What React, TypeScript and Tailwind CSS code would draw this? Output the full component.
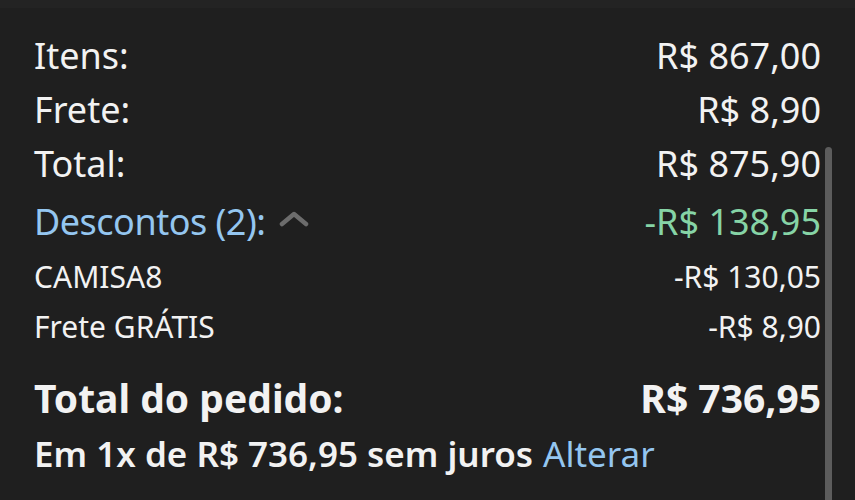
const Row = ({ label, value, className }: { label: string; value: string; className: string }) => (
    <div className={"flex justify-between items-center " + className}>
        <span>{label}</span>
        <span>{value}</span>
    </div>
)

const App = () => {
    return (
        <div className="w-[855px] h-[500px] bg-[#1f1f1f] overflow-hidden flex flex-col text-[#f2f2f2]" style={{ fontFamily: '"Noto Sans", "Open Sans", sans-serif' }}>
            <div className="h-[8px] bg-[#232323] shrink-0" />
            <div className="flex flex-1">
                <div className="flex-1 pl-[34px] pr-[4px] pt-[21px]">
                    <Row label="Itens:" value="R$ 867,00" className="h-[54px] text-[36px]" />
                    <Row label="Frete:" value="R$ 8,90" className="h-[54px] text-[36px]" />
                    <Row label="Total:" value="R$ 875,90" className="h-[54px] text-[36px]" />
                    <div className="flex justify-between items-center h-[62px] text-[36px]">
                        <span className="flex items-center text-[#94c6f0]">
                            <span className="tracking-[-0.5px]">Descontos (2):</span>
                            <svg width="30" height="16" viewBox="0 0 30 16" className="ml-[14px] mb-[6px]">
                                <polyline points="3,13 15,3 27,13" fill="none" stroke="#6c6c6c" strokeWidth="4.5" strokeLinecap="round" strokeLinejoin="round" />
                            </svg>
                        </span>
                        <span className="text-[#86d4a6]">-R$ 138,95</span>
                    </div>
                    <Row label="CAMISA8" value="-R$ 130,05" className="h-[47px] text-[30px]" />
                    <Row label="Frete GRÁTIS" value="-R$ 8,90" className="h-[53px] text-[30px]" />
                    <Row label="Total do pedido:" value="R$ 736,95" className="h-[50px] mt-[20px] text-[39px] font-bold" />
                    <div className="h-[63px] flex items-center text-[35px] font-semibold">
                        <span>Em 1x de R$ 736,95 sem juros</span>
                        <span className="ml-[10px] font-normal text-[#94c6f0]">Alterar</span>
                    </div>
                </div>
                <div className="w-[7px] mt-[139px] bg-[#5c5c5c] rounded-t-full" />
                <div className="w-[23px]" />
            </div>
        </div>
    )
}

export default App
